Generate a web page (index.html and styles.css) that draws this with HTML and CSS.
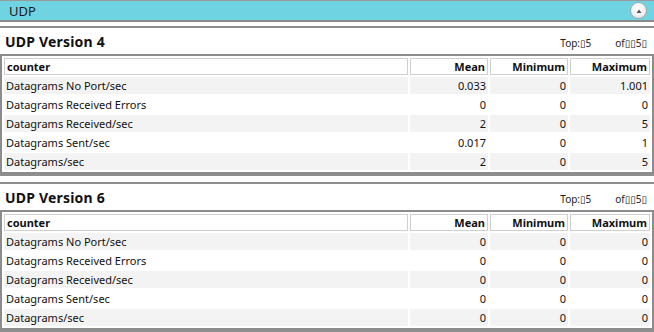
FILE: index.html
```html
<!DOCTYPE html>
<html>
<head>
<meta charset="utf-8">
<link rel="stylesheet" href="styles.css">
</head>
<body>
<div class="bar">
  <span class="bar-title">UDP</span>
  <span class="collapse"><svg width="10" height="8" viewBox="0 0 10 8"><path d="M2.5 6 L5 2.5 L7.5 6 Z" fill="#555"/></svg></span>
</div>

<section class="panel">
  <div class="panel-head">
    <h2 class="panel-title">UDP Version 4</h2>
    <div class="topn"><span>Top:▯5</span><span>of▯▯5▯</span></div>
  </div>
  <table class="grid">
    <thead>
      <tr><th class="name">counter</th><th>Mean</th><th>Minimum</th><th>Maximum</th></tr>
    </thead>
    <tbody>
      <tr class="alt"><td class="name">Datagrams No Port/sec</td><td>0.033</td><td>0</td><td>1.001</td></tr>
      <tr><td class="name">Datagrams Received Errors</td><td>0</td><td>0</td><td>0</td></tr>
      <tr class="alt"><td class="name">Datagrams Received/sec</td><td>2</td><td>0</td><td>5</td></tr>
      <tr><td class="name">Datagrams Sent/sec</td><td>0.017</td><td>0</td><td>1</td></tr>
      <tr class="alt"><td class="name">Datagrams/sec</td><td>2</td><td>0</td><td>5</td></tr>
    </tbody>
  </table>
</section>

<section class="panel">
  <div class="panel-head">
    <h2 class="panel-title">UDP Version 6</h2>
    <div class="topn"><span>Top:▯5</span><span>of▯▯5▯</span></div>
  </div>
  <table class="grid">
    <thead>
      <tr><th class="name">counter</th><th>Mean</th><th>Minimum</th><th>Maximum</th></tr>
    </thead>
    <tbody>
      <tr class="alt"><td class="name">Datagrams No Port/sec</td><td>0</td><td>0</td><td>0</td></tr>
      <tr><td class="name">Datagrams Received Errors</td><td>0</td><td>0</td><td>0</td></tr>
      <tr class="alt"><td class="name">Datagrams Received/sec</td><td>0</td><td>0</td><td>0</td></tr>
      <tr><td class="name">Datagrams Sent/sec</td><td>0</td><td>0</td><td>0</td></tr>
      <tr class="alt"><td class="name">Datagrams/sec</td><td>0</td><td>0</td><td>0</td></tr>
    </tbody>
  </table>
</section>
</body>
</html>
```

FILE: styles.css
```css
html, body {
  margin: 0;
  padding: 0;
  background: #fff;
}
body {
  font-family: "Noto Sans", "DejaVu Sans", sans-serif;
  font-size: 11px;
  color: #111;
  width: 654px;
  overflow: hidden;
}
.bar {
  height: 19px;
  background: #70d3e2;
  border-top: 1px solid #9a9a9a;
  border-bottom: 2px solid #8a8a8a;
  display: flex;
  align-items: center;
  justify-content: space-between;
  padding: 0 7px 0 9px;
}
.bar-title {
  font-size: 13px;
  color: #1a1a1a;
}
.collapse {
  width: 15px;
  height: 15px;
  border-radius: 50%;
  border: 1px solid #9aa;
  background: radial-gradient(circle at 50% 35%, #ffffff 0%, #f2f2f2 55%, #d9d9d9 100%);
  display: flex;
  align-items: center;
  justify-content: center;
}
.panel {
  margin-top: 4px;
  border-top: 2px solid #8e8e8e;
  border-bottom: 2px solid #8e8e8e;
}
.panel + .panel {
  margin-top: 6px;
}
.panel-head {
  height: 26px;
  display: flex;
  align-items: center;
  justify-content: space-between;
  padding: 0 7px 0 5px;
}
.panel-title {
  margin: 0;
  font-size: 14px;
  letter-spacing: 0.2px;
  font-weight: bold;
  color: #111;
}
.topn {
  display: flex;
  gap: 24px;
  font-size: 10px;
  color: #222;
  padding-top: 3px;
}
.grid {
  width: 654px;
  border: 2px solid #8c8c8c;
  border-spacing: 2px;
  table-layout: fixed;
  font-size: 11px;
}
.grid th, .grid td {
  height: 17px;
  padding: 0 2px 0 2px;
  text-align: right;
  white-space: nowrap;
  line-height: 17px;
}
.grid th {
  border: 1px solid #cfcfcf;
  height: 15px;
  line-height: 15px;
  font-weight: bold;
}
.grid .name {
  text-align: left;
}
.grid th:nth-child(2), .grid th:nth-child(3) { width: 72px; }
.grid th:nth-child(4) { width: 74px; }
.grid tr.alt td {
  background: #f3f3f3;
}
```
